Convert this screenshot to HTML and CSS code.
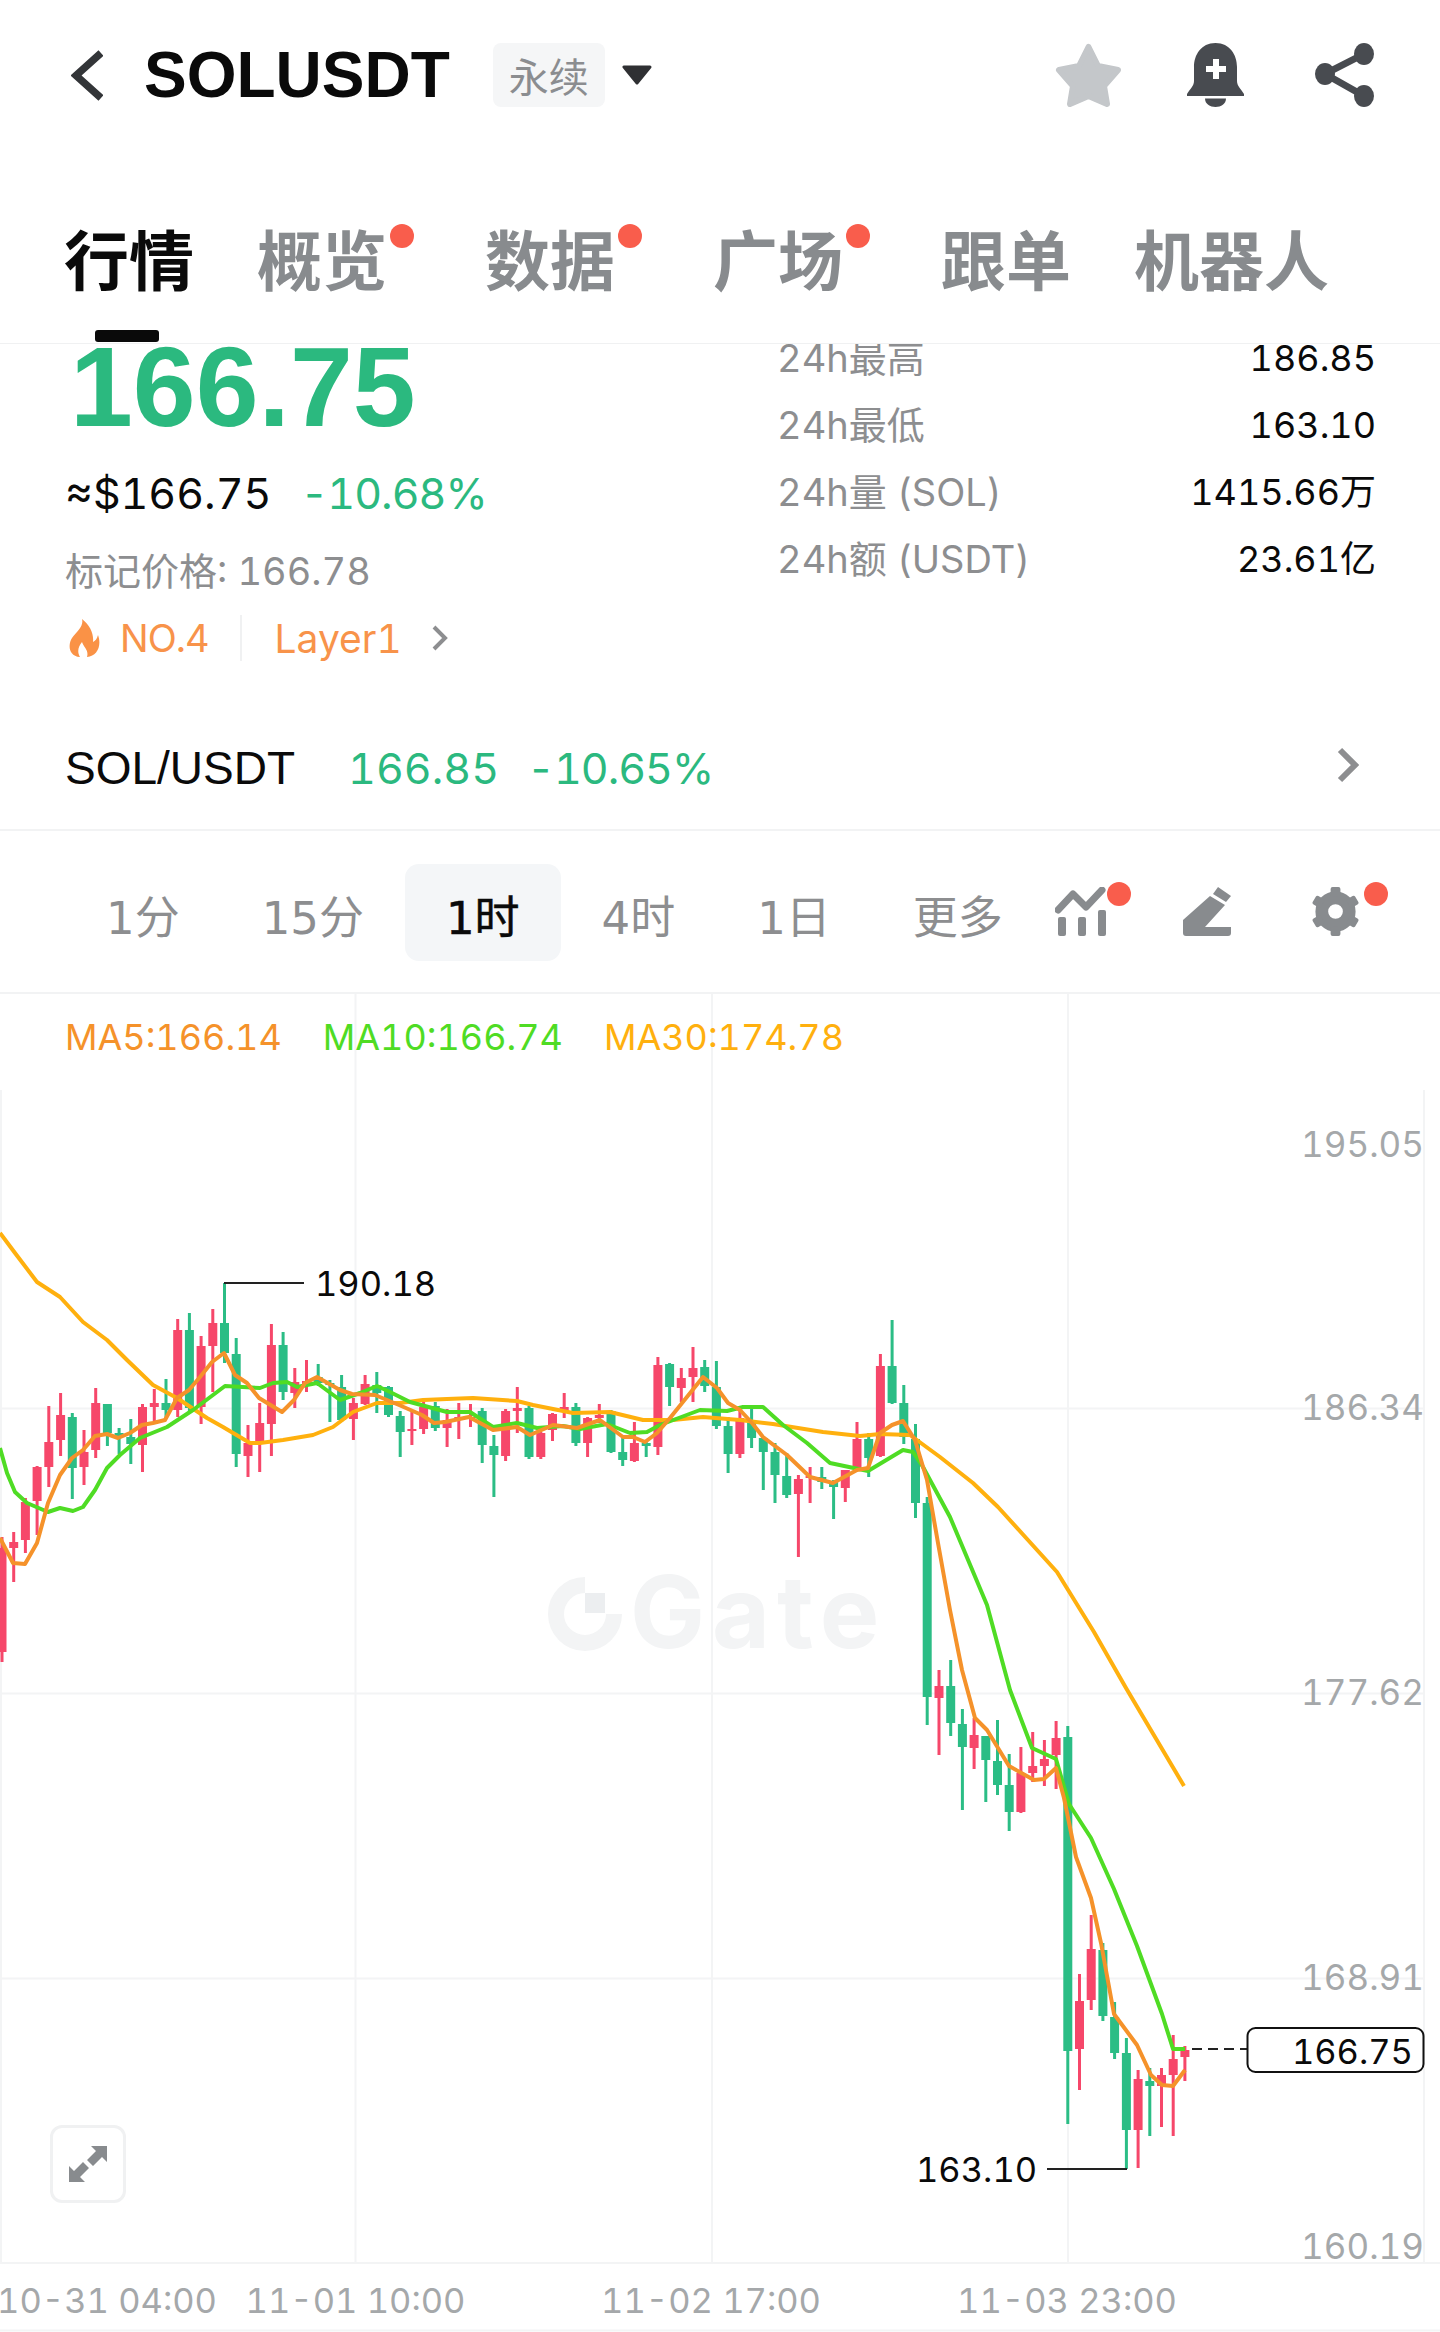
FILE: index.html
```html
<!DOCTYPE html>
<html lang="zh-CN">
<head>
    <meta charset="UTF-8">
    <meta name="viewport" content="width=device-width, initial-scale=1.0">
    <title>SOLUSDT 永续</title>
    <link rel="stylesheet" href="styles.css">
</head>
<body>
<div class="page">
    <header class="topbar">
        <svg class="back-icon" viewBox="0 0 32 51"><path d="M30 3 L5 25.5 L30 48" fill="none" stroke="#333538" stroke-width="7.5"/></svg>
        <h1 class="symbol">SOLUSDT</h1>
        <span class="contract-tag">永续</span>
        <svg class="caret-icon" viewBox="0 0 30 20"><path d="M2 2 H28 L15 18 Z" fill="#2f3033" stroke="#2f3033" stroke-width="3" stroke-linejoin="round"/></svg>
        <div class="top-actions">
            <svg class="star-icon" viewBox="0 0 67 64"><path d="M33.5 4 L43 23 L63 27 L49 43 L52 61 L33.5 53 L15 61 L18 43 L4 27 L24 23 Z" fill="#c4c7ca" stroke="#c4c7ca" stroke-width="6" stroke-linejoin="round"/></svg>
            <svg class="bell-icon" viewBox="0 0 57 64">
                <path d="M28.5 0 C14 0 7 12 7 24 V38 C7 43 3 46 0 51 V53 H57 V51 C54 46 50 43 50 38 V24 C50 12 43 0 28.5 0 Z" fill="#484b50"/>
                <path d="M18 55.5 H39 C39 61 34 64 28.5 64 C23 64 18 61 18 55.5 Z" fill="#484b50"/>
                <path d="M26 16 H32 V23 H39 V29 H32 V36 H26 V29 H19 V23 H26 Z" fill="#fff"/>
            </svg>
            <svg class="share-icon" viewBox="0 0 60 64">
                <path d="M50 11 L11 31 L50 53" fill="none" stroke="#484b50" stroke-width="7"/>
                <ellipse cx="50" cy="11" rx="10" ry="11" fill="#484b50"/>
                <ellipse cx="11" cy="31" rx="10" ry="11" fill="#484b50"/>
                <ellipse cx="50" cy="53" rx="10" ry="11" fill="#484b50"/>
            </svg>
        </div>
    </header>

    <nav class="tabs">
        <a class="tab active">行情</a>
        <a class="tab has-dot">概览</a>
        <a class="tab has-dot">数据</a>
        <a class="tab has-dot">广场</a>
        <a class="tab">跟单</a>
        <a class="tab">机器人</a>
    </nav>

    <section class="summary">
        <div class="price-col">
            <div class="last-price">166.75</div>
            <div class="usd-row"><span>≈$166.75</span><span class="up-text change">-10.68%</span></div>
            <div class="mark-row">标记价格: 166.78</div>
            <div class="tag-row">
                <svg class="flame-icon" viewBox="0 0 32 38"><path d="M14 0 C16 7 9 12 4 19 C0 25 0 37 12 38 C9 33 10 28 14 23 C16 29 21 31 19 38 C29 37 34 27 30 16 C29 20 27 22 25 23 C26 15 22 6 14 0 Z" fill="#fa9246"/></svg>
                <span class="rank">NO.4</span>
                <span class="sector">Layer1</span>
                <svg class="tag-chevron" viewBox="0 0 16 26"><path d="M2 2 L13 13 L2 24" fill="none" stroke="#8d8e90" stroke-width="4"/></svg>
            </div>
        </div>
        <dl class="stats-col">
            <div class="stat"><dt>24h最高</dt><dd>186.85</dd></div>
            <div class="stat"><dt>24h最低</dt><dd>163.10</dd></div>
            <div class="stat"><dt>24h量 (SOL)</dt><dd>1415.66万</dd></div>
            <div class="stat"><dt>24h额 (USDT)</dt><dd>23.61亿</dd></div>
        </dl>
    </section>

    <section class="spot-row">
        <span class="spot-name">SOL/USDT</span>
        <span class="up-text spot-price">166.85</span>
        <span class="up-text change spot-change">-10.65%</span>
        <svg class="spot-chevron" viewBox="0 0 22 36"><path d="M3 3 L18 18 L3 33" fill="none" stroke="#8d8e90" stroke-width="6"/></svg>
    </section>

    <section class="toolbar">
        <span class="interval">1分</span>
        <span class="interval">15分</span>
        <span class="interval selected">1时</span>
        <span class="interval">4时</span>
        <span class="interval">1日</span>
        <span class="interval">更多</span>
        <div class="tool-icons">
            <span class="tool-icon has-dot">
                <svg viewBox="0 0 52 49" fill="#888b8e">
                    <path d="M3 23 L18 7 L31 20 L47 3" fill="none" stroke="#888b8e" stroke-width="7" stroke-linejoin="round" stroke-linecap="round"/>
                    <rect x="3" y="30" width="8" height="19" rx="2"/>
                    <rect x="23" y="30" width="8" height="19" rx="2"/>
                    <rect x="43" y="23" width="8" height="26" rx="2"/>
                </svg>
            </span>
            <span class="tool-icon">
                <svg viewBox="0 0 48 49" fill="#888b8e">
                    <path d="M35 0 L48 9 L43 15 L30 7 Z"/>
                    <path d="M0 33 L27 9 L42 18 L22 40 H48 V46 Q48 49 45 49 H3 Q0 49 0 46 Z"/>
                </svg>
            </span>
            <span class="tool-icon has-dot">
                <svg viewBox="0 0 48 50" fill="#888b8e">
                    <circle cx="24" cy="25" r="14" fill="none" stroke="#888b8e" stroke-width="13"/>
                    <rect x="19" y="0" width="10" height="10" rx="2"/>
                    <rect x="19" y="40" width="10" height="10" rx="2"/>
                    <rect x="19" y="0" width="10" height="10" rx="2" transform="rotate(60 24 25)"/>
                    <rect x="19" y="40" width="10" height="10" rx="2" transform="rotate(60 24 25)"/>
                    <rect x="19" y="0" width="10" height="10" rx="2" transform="rotate(-60 24 25)"/>
                    <rect x="19" y="40" width="10" height="10" rx="2" transform="rotate(-60 24 25)"/>
                </svg>
            </span>
        </div>
    </section>

    <section class="chart">
        <svg class="chart-canvas" viewBox="0 994 1440 1338">
            <g class="grid-lines">
                <path d="M1 1090 V2263 M355.5 994 V2263 M712 994 V2263 M1068 994 V2263 M1424 1090 V2263"/>
                <path d="M0 1408.5 H1424 M0 1693.5 H1424 M0 1978.5 H1424 M0 2263 H1440 M0 2330.5 H1440"/>
            </g>

            <g class="watermark">
                <path d="M585 1585 A29 29 0 1 0 614 1614" fill="none" stroke="#f3f4f5" stroke-width="16"/>
                <rect x="585" y="1593" width="20" height="20" fill="#eceef0"/>
                <text x="630" y="1648">Gate</text>
            </g>

            <g id="candles"></g>

            <polyline class="ma ma30" points="0,1233 15,1253 37,1282 60,1297 83,1322 107,1340 127,1360 153,1385 177,1398 207,1418 223,1427 250,1443 260,1443 283,1440 313,1435 333,1427 353,1412 377,1403 400,1403 423,1400 447,1399 473,1398 517,1401 533,1405 573,1413 610,1412 643,1420 673,1420 703,1417 740,1420 773,1424 823,1432 860,1436 880,1434 910,1435 940,1457 973,1483 998,1507 1057,1572 1094,1632 1126,1688 1184,1786"/>
            <polyline class="ma ma10" points="0,1448 7,1473 15,1492 27,1503 48,1512 60,1508 73,1511 83,1507 95,1490 107,1468 120,1455 140,1438 167,1427 193,1410 213,1395 225,1386 260,1388 273,1383 287,1382 297,1387 317,1383 340,1400 360,1393 377,1386 390,1392 410,1402 447,1412 470,1412 493,1427 517,1423 537,1428 563,1426 580,1429 607,1424 630,1433 647,1432 660,1425 700,1410 727,1411 743,1407 763,1407 783,1425 807,1443 830,1463 868,1471 903,1450 913,1452 923,1467 950,1517 987,1605 1010,1690 1032,1748 1056,1759 1069,1804 1091,1838 1114,1889 1137,1946 1162,2014 1173,2049 1185,2049"/>
            <polyline class="ma ma5" points="0,1538 13,1563 25,1564 37,1543 48,1503 60,1475 72,1458 83,1450 95,1436 107,1434 118,1438 130,1433 142,1425 153,1423 165,1420 177,1398 189,1390 200,1377 212,1362 224,1353 235,1375 247,1383 259,1398 282,1412 294,1400 305,1383 317,1377 340,1390 352,1394 375,1395 399,1405 422,1415 434,1423 445,1422 469,1417 493,1430 517,1427 530,1435 553,1425 577,1428 600,1420 623,1437 633,1437 645,1442 657,1433 670,1418 703,1377 717,1388 728,1403 740,1410 752,1423 763,1437 787,1455 810,1477 833,1483 857,1470 868,1468 880,1433 892,1425 903,1421 915,1440 927,1480 938,1543 950,1610 962,1670 975,1718 987,1730 1009,1766 1034,1780 1044,1779 1056,1768 1064,1798 1076,1857 1091,1898 1101,1943 1114,2014 1137,2045 1151,2075 1162,2085 1173,2086 1185,2070"/>

            <g class="axis-labels">
                <text x="1424" y="1157">195.05</text>
                <text x="1424" y="1420">186.34</text>
                <text x="1424" y="1705">177.62</text>
                <text x="1424" y="1990">168.91</text>
                <text x="1424" y="2259">160.19</text>
            </g>
            <g class="date-labels">
                <text x="107" y="2313">10-31 04:00</text>
                <text x="355.5" y="2313">11-01 10:00</text>
                <text x="711" y="2313">11-02 17:00</text>
                <text x="1067" y="2313">11-03 23:00</text>
            </g>

            <path class="marker-line" d="M224 1283 H304"/>
            <text class="marker-text" x="315" y="1296">190.18</text>
            <path class="marker-line" d="M1047 2169 H1127"/>
            <text class="marker-text" x="916" y="2182">163.10</text>

            <path class="last-dash" d="M1192 2049 H1247"/>
            <rect class="last-box" x="1247.5" y="2028" width="176" height="44" rx="8"/>
            <text class="last-text" x="1413" y="2064">166.75</text>
        </svg>

        <div class="ma-legend">
            <span class="ma5-text">MA5:166.14</span>
            <span class="ma10-text">MA10:166.74</span>
            <span class="ma30-text">MA30:174.78</span>
        </div>

        <button class="expand-btn">
            <svg viewBox="0 0 38 36" fill="#888b8e">
                <path d="M22 0 H38 V16 L33 11 L24 20 L18 14 L27 5 Z"/>
                <path d="M0 20 V36 H16 L11 31 L20 22 L14 16 L5 25 Z"/>
            </svg>
        </button>
    </section>
</div>
<script src="chart.js"></script>
</body>
</html>
```

FILE: styles.css
```css
* {
    box-sizing: border-box;
}
body {
    margin: 0;
    background: #fff;
    font-family: Inter, "Noto Sans CJK SC", sans-serif;
    font-variant-numeric: tabular-nums;
    color: #0a0a0a;
}
.page {
    width: 1440px;
    height: 2332px;
    overflow: hidden;
    display: flex;
    flex-direction: column;
}

/* top bar */
.topbar {
    height: 150px;
    display: flex;
    align-items: center;
    padding: 0 66px 0 71px;
}
.back-icon {
    width: 32px;
    height: 51px;
}
.symbol {
    margin: 0 0 0 41px;
    font: bold 64px/1 "Liberation Sans", sans-serif;
}
.contract-tag {
    margin-left: 43px;
    width: 112px;
    height: 64px;
    border-radius: 8px;
    background: #f5f6f7;
    color: #8b8d90;
    font: 40px/64px "Noto Sans CJK SC", sans-serif;
    text-align: center;
}
.caret-icon {
    margin-left: 17px;
    width: 30px;
    height: 20px;
}
.top-actions {
    margin-left: auto;
    display: flex;
    align-items: center;
}
.star-icon {
    width: 67px;
    height: 64px;
}
.bell-icon {
    margin-left: 65px;
    width: 57px;
    height: 64px;
}
.share-icon {
    margin-left: 70px;
    width: 60px;
    height: 64px;
}

/* tabs */
.tabs {
    position: relative;
    z-index: 2;
    height: 194px;
    padding: 67px 0 0 64px;
    display: flex;
    gap: 63px;
    background: #fff;
    border-bottom: 1px solid #f0f1f2;
}
.tab {
    position: relative;
    height: 80px;
    font: bold 65px/80px "Noto Sans CJK SC", sans-serif;
    color: #888b8e;
}
.tab.active {
    color: #0a0a0a;
}
.tab.active::after {
    content: "";
    position: absolute;
    left: 31px;
    top: 113px;
    width: 64px;
    height: 12px;
    border-radius: 3px;
    background: #0a0a0a;
}
.tab.has-dot {
    padding-right: 27px;
    margin-right: 8px;
}
.tab.has-dot::before {
    content: "";
    position: absolute;
    right: 0;
    top: 7px;
    width: 24px;
    height: 24px;
    border-radius: 50%;
    background: #f95d4c;
}

/* price summary */
.summary {
    height: 356px;
    display: flex;
    overflow: hidden;
}
.price-col {
    width: 777px;
    padding-left: 65px;
}
.last-price {
    margin: -13px 0 0 5px;
    font: bold 113px/113px "Liberation Sans", sans-serif;
    color: #2bb97f;
}
.up-text {
    color: #2bb97f;
}
.change {
    letter-spacing: -1px;
}
.usd-row {
    margin-top: 24px;
    display: flex;
    gap: 29px;
    font-size: 43px;
    line-height: 50px;
}
.mark-row {
    margin-top: 31px;
    font-size: 38px;
    line-height: 44px;
    color: #8d8e90;
}
.tag-row {
    margin-top: 23px;
    height: 44px;
    display: flex;
    align-items: center;
    font-size: 38px;
    color: #f8934a;
}
.flame-icon {
    margin-left: 3px;
    width: 32px;
    height: 38px;
}
.rank {
    margin-left: 20px;
    padding-right: 31px;
    letter-spacing: -1px;
    border-right: 2px solid #f0f1f2;
}
.sector {
    margin-left: 33px;
    font-size: 39px;
}
.tag-chevron {
    margin-left: 30px;
    width: 16px;
    height: 26px;
}
.stats-col {
    width: 599px;
    margin: -19px 0 0;
}
.stat {
    display: flex;
    justify-content: space-between;
    font-size: 38px;
    line-height: 67px;
}
.stat dt {
    color: #8d8e90;
}
.stat dd {
    margin: 0;
    font-size: 36px;
}

/* spot row */
.spot-row {
    height: 131px;
    display: flex;
    align-items: center;
    padding: 6px 81px 0 65px;
    font-size: 43px;
    border-bottom: 2px solid #f2f3f4;
}
.spot-name {
    font-family: "Liberation Sans", sans-serif;
    font-size: 46px;
}
.spot-price {
    margin-left: 53px;
}
.spot-change {
    margin-left: 28px;
}
.spot-chevron {
    margin: -6px 0 0 auto;
    width: 22px;
    height: 36px;
}

/* interval toolbar */
.toolbar {
    height: 163px;
    display: flex;
    align-items: center;
    padding-left: 65px;
    border-bottom: 2px solid #f2f3f4;
}
.interval {
    margin-top: 1px;
    height: 97px;
    padding: 13px 41px 0;
    border-radius: 14px;
    font: 45px/84px "DejaVu Sans", "Noto Sans CJK SC", sans-serif;
    color: #8d8e90;
}
.interval.selected {
    background: #f4f6f8;
    color: #0a0a0a;
    -webkit-text-stroke: 0.5px #0a0a0a;
}
.tool-icons {
    margin-left: auto;
    display: flex;
}
.tool-icon {
    position: relative;
    width: 128.3px;
    height: 49px;
}
.tool-icon svg {
    display: block;
    height: 49px;
}
.tool-icon.has-dot::after {
    content: "";
    position: absolute;
    left: 52px;
    top: -5px;
    width: 24px;
    height: 24px;
    border-radius: 50%;
    background: #f95d4c;
}

/* chart */
.chart {
    position: relative;
    flex: 1;
}
.chart-canvas {
    display: block;
    width: 1440px;
    height: 1338px;
}
.grid-lines path {
    fill: none;
    stroke: #f3f4f5;
    stroke-width: 2;
}
.watermark text {
    font: 700 100px Inter, sans-serif;
    letter-spacing: 7px;
    fill: #f3f4f5;
}
.wick {
    stroke-width: 3;
    fill: none;
}
.body {
    stroke-width: 9;
    fill: none;
}
.green {
    stroke: #2bbd85;
}
.red {
    stroke: #f6476a;
}
.ma {
    fill: none;
    stroke-width: 4;
    stroke-linejoin: round;
}
.ma5 {
    stroke: #f5922a;
}
.ma10 {
    stroke: #4fdc24;
}
.ma30 {
    stroke: #ffb00e;
}
.axis-labels text {
    font-size: 35px;
    fill: #a5a8aa;
    text-anchor: end;
}
.date-labels text {
    font-size: 34.5px;
    fill: #a5a8aa;
    text-anchor: middle;
}
.marker-line {
    fill: none;
    stroke: #222;
    stroke-width: 2;
}
.marker-text, .last-text {
    font-size: 34.5px;
    fill: #0a0a0a;
}
.last-text {
    text-anchor: end;
}
.last-dash {
    fill: none;
    stroke: #222;
    stroke-width: 2;
    stroke-dasharray: 10 6;
}
.last-box {
    fill: #fff;
    stroke: #111;
    stroke-width: 2;
}
.ma-legend {
    position: absolute;
    left: 65px;
    top: 20px;
    display: flex;
    gap: 41px;
    font-size: 36px;
    line-height: 46px;
}
.ma5-text {
    color: #f5922a;
}
.ma10-text {
    color: #4fdc24;
}
.ma30-text {
    color: #ffb00e;
}
.expand-btn {
    position: absolute;
    left: 50px;
    top: 1131px;
    width: 76px;
    height: 78px;
    padding: 0;
    display: flex;
    align-items: center;
    justify-content: center;
    background: #fff;
    border: 3px solid #f0f1f2;
    border-radius: 12px;
}
.expand-btn svg {
    width: 38px;
    height: 36px;
}
```

FILE: chart.js
```js
// candle rows: high, body top, body bottom, low, colour (page y coordinates)
var rows = [
    [1537,1548,1652,1662,'r'],[1532,1542,1548,1582,'r'],[1498,1502,1540,1553,'r'],[1466,1467,1501,1535,'r'],
    [1406,1442,1467,1487,'r'],[1393,1415,1440,1456,'r'],[1413,1417,1468,1499,'g'],[1430,1452,1467,1485,'r'],
    [1388,1403,1450,1458,'r'],[1404,1404,1433,1446,'g'],[1428,1433,1436,1454,'g'],[1419,1437,1444,1464,'g'],
    [1404,1407,1445,1472,'r'],[1389,1403,1407,1423,'r'],[1379,1403,1410,1418,'g'],[1319,1330,1410,1417,'r'],
    [1313,1330,1408,1412,'g'],[1336,1346,1407,1424,'r'],[1309,1323,1346,1392,'r'],[1283,1323,1353,1363,'g'],
    [1338,1354,1454,1467,'g'],[1425,1443,1456,1477,'r'],[1403,1423,1443,1472,'r'],[1324,1345,1424,1456,'r'],
    [1332,1345,1392,1400,'g'],[1368,1382,1393,1408,'r'],[1360,1381,1385,1392,'r'],[1364,1377,1383,1386,'g'],
    [1380,1383,1385,1422,'g'],[1375,1387,1420,1422,'g'],[1398,1403,1419,1440,'r'],[1375,1384,1404,1405,'r'],
    [1372,1385,1393,1413,'g'],[1386,1387,1415,1417,'g'],[1411,1416,1432,1457,'g'],[1412,1429,1431,1445,'r'],
    [1402,1407,1429,1434,'r'],[1402,1406,1428,1431,'g'],[1409,1420,1428,1447,'r'],[1403,1417,1420,1439,'r'],
    [1404,1417,1418,1427,'r'],[1408,1411,1445,1463,'g'],[1435,1446,1455,1497,'g'],[1409,1411,1456,1461,'r'],
    [1387,1408,1411,1433,'r'],[1406,1408,1457,1459,'g'],[1432,1433,1457,1459,'r'],[1413,1414,1430,1441,'r'],
    [1393,1407,1410,1418,'r'],[1403,1407,1443,1446,'g'],[1417,1418,1443,1457,'r'],[1404,1415,1418,1423,'r'],
    [1410,1411,1452,1453,'g'],[1438,1452,1460,1466,'g'],[1422,1443,1461,1462,'r'],[1440,1443,1446,1457,'g'],
    [1357,1365,1447,1455,'r'],[1363,1364,1387,1406,'g'],[1368,1378,1388,1402,'r'],[1347,1368,1377,1402,'r'],
    [1360,1367,1386,1392,'g'],[1361,1387,1426,1429,'g'],[1417,1426,1454,1473,'g'],[1410,1418,1454,1458,'r'],
    [1408,1420,1438,1448,'g'],[1438,1438,1452,1490,'g'],[1443,1452,1475,1503,'g'],[1453,1476,1495,1498,'g'],
    [1475,1479,1494,1557,'r'],[1467,1476,1478,1503,'r'],[1467,1477,1482,1489,'g'],[1480,1482,1487,1519,'g'],
    [1470,1470,1488,1502,'r'],[1422,1439,1468,1470,'r'],[1433,1439,1458,1477,'g'],[1354,1366,1456,1457,'r'],
    [1320,1366,1403,1404,'g'],[1385,1403,1437,1444,'g'],[1424,1439,1503,1518,'g'],[1497,1503,1697,1725,'g'],
    [1670,1686,1698,1755,'r'],[1660,1686,1723,1736,'g'],[1709,1724,1747,1810,'g'],[1718,1735,1748,1769,'r'],
    [1736,1736,1760,1802,'g'],[1720,1761,1785,1795,'g'],[1754,1785,1812,1831,'g'],[1747,1773,1812,1813,'r'],
    [1732,1766,1773,1782,'r'],[1740,1759,1766,1786,'r'],[1721,1738,1755,1789,'r'],[1726,1737,2051,2124,'g'],
    [1974,2001,2049,2090,'r'],[1915,1949,2000,2010,'r'],[1943,1950,2016,2021,'g'],[2002,2017,2053,2059,'g'],
    [2038,2053,2130,2169,'g'],[2070,2079,2130,2168,'r'],[2068,2081,2086,2136,'g'],[2068,2075,2086,2127,'r'],
    [2035,2059,2075,2136,'r'],[2046,2050,2057,2081,'r']
];

document.addEventListener("DOMContentLoaded", function() {
    var wick = { r: '', g: '' };
    var body = { r: '', g: '' };
    for (var i = 0; i < rows.length; i++) {
        var x = (2 + i * 11.712).toFixed(1);
        var c = rows[i];
        wick[c[4]] += 'M' + x + ' ' + c[0] + 'V' + c[3];
        body[c[4]] += 'M' + x + ' ' + c[1] + 'V' + c[2];
    }
    document.getElementById('candles').innerHTML =
        '<path class="wick green" d="' + wick.g + '"/>' +
        '<path class="wick red" d="' + wick.r + '"/>' +
        '<path class="body green" d="' + body.g + '"/>' +
        '<path class="body red" d="' + body.r + '"/>';
});
```
